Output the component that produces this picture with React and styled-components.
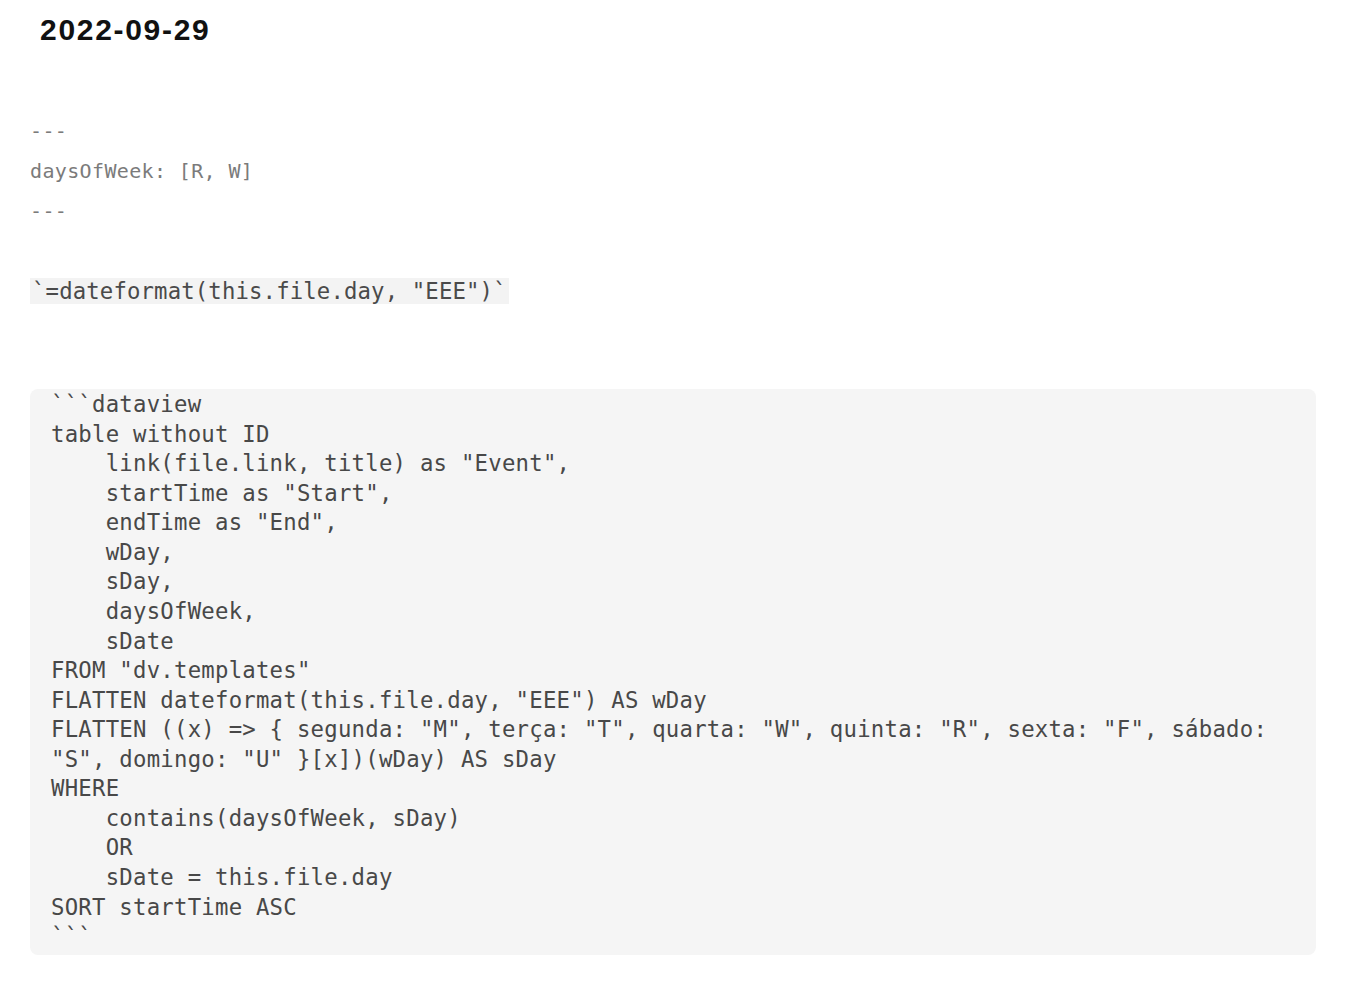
import React from "react";
import styled, { createGlobalStyle } from "styled-components";

const Global = createGlobalStyle`
  html, body { margin: 0; padding: 0; background: #ffffff; }
  body { font-family: "Liberation Sans", Arial, sans-serif; }
`;

const Page = styled.div`
  padding: 12px 34px 40px 30px;
  display: flex;
  flex-direction: column;
`;

const Title = styled.h1`
  margin: 0 0 0 10px;
  font-family: "Liberation Sans", Arial, sans-serif;
  font-weight: 700;
  font-size: 30px;
  letter-spacing: 1.7px;
  line-height: 36px;
  color: #111111;
`;

const Frontmatter = styled.div`
  margin-top: 63px;
  display: flex;
  flex-direction: column;
`;

const FmLine = styled.div`
  font-family: "DejaVu Sans Mono", "Liberation Mono", monospace;
  font-size: 20px;
  letter-spacing: 0.36px;
  line-height: 40px;
  height: 40px;
  color: #7b7b7b;
  white-space: pre;
`;

const Para = styled.div`
  margin-top: 47px;
  line-height: 26px;
  height: 26px;
`;

const InlineCode = styled.code`
  display: inline-block;
  background: #f3f3f3;
  padding: 0 2px;
  font-family: "DejaVu Sans Mono", "Liberation Mono", monospace;
  font-size: 22.3px;
  letter-spacing: 0.14px;
  line-height: 26px;
  color: #4a4a4a;
  white-space: pre;
`;

const CodeBlock = styled.pre`
  margin: 85px 0 0 0;
  background: #f5f5f5;
  border-radius: 8px;
  padding: 1px 21px 3px 21px;
  font-family: "DejaVu Sans Mono", "Liberation Mono", monospace;
  font-size: 22.3px;
  letter-spacing: 0.24px;
  line-height: 29.56px;
  color: #484848;
  white-space: pre;
`;

const code = [
  "```dataview",
  "table without ID",
  '    link(file.link, title) as "Event",',
  '    startTime as "Start",',
  '    endTime as "End",',
  "    wDay,",
  "    sDay,",
  "    daysOfWeek,",
  "    sDate",
  'FROM "dv.templates"',
  'FLATTEN dateformat(this.file.day, "EEE") AS wDay',
  'FLATTEN ((x) => { segunda: "M", terça: "T", quarta: "W", quinta: "R", sexta: "F", sábado:',
  '"S", domingo: "U" }[x])(wDay) AS sDay',
  "WHERE",
  "    contains(daysOfWeek, sDay)",
  "    OR",
  "    sDate = this.file.day",
  "SORT startTime ASC",
  "```",
].join("\n");

export default function App() {
  return (
    <>
      <Global />
      <Page>
        <Title>2022-09-29</Title>
        <Frontmatter>
          <FmLine>---</FmLine>
          <FmLine>daysOfWeek: [R, W]</FmLine>
          <FmLine>---</FmLine>
        </Frontmatter>
        <Para>
          <InlineCode>{'`=dateformat(this.file.day, "EEE")`'}</InlineCode>
        </Para>
        <CodeBlock>{code}</CodeBlock>
      </Page>
    </>
  );
}
